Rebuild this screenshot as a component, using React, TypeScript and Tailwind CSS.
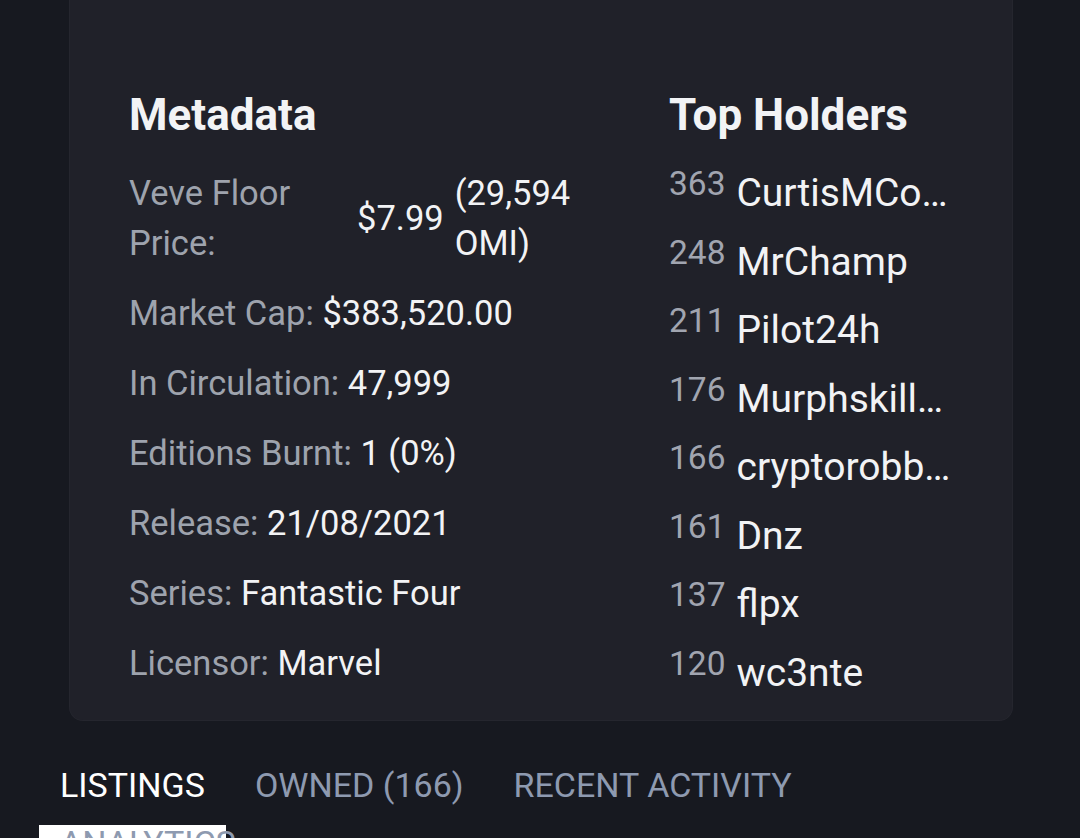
import { useState } from "react";

type Row = { label: string; value: string };

const metadata: Row[] = [
    { label: "Market Cap:", value: "$383,520.00" },
    { label: "In Circulation:", value: "47,999" },
    { label: "Editions Burnt:", value: "1 (0%)" },
    { label: "Release:", value: "21/08/2021" },
    { label: "Series:", value: "Fantastic Four" },
    { label: "Licensor:", value: "Marvel" },
];

const holders = [
    { count: 363, name: "CurtisMCo…" },
    { count: 248, name: "MrChamp" },
    { count: 211, name: "Pilot24h" },
    { count: 176, name: "Murphskill…" },
    { count: 166, name: "cryptorobb…" },
    { count: 161, name: "Dnz" },
    { count: 137, name: "flpx" },
    { count: 120, name: "wc3nte" },
];

const tabs = ["Listings", "Owned (166)", "Recent Activity", "Analytics"];

export default function App() {
    const [active, setActive] = useState(0);

    return (
        <div
            className="h-[838px] overflow-hidden bg-[#171920] text-[#f2f3f5]"
            style={{ fontFamily: "Roboto, 'Noto Sans', sans-serif" }}
        >
            {/* Card */}
            <div className="ml-[69px] w-[944px] rounded-b-[14px] border border-t-0 border-[#25262e] bg-[#202129] px-[59px] pt-[90px] pb-[22px]">
                <div className="grid grid-cols-[540px_1fr]">
                    {/* Metadata */}
                    <div>
                        <h2 className="text-[44px] font-bold leading-[50px]">Metadata</h2>
                        <div className="mt-[28px] flex flex-col gap-[20px] text-[34.5px] leading-[50px]">
                            <div className="flex items-center">
                                <span className="w-[228px] text-[#9ea3ad]">Veve Floor Price:</span>
                                <span>$7.99</span>
                                <span className="ml-[11px] w-[124px]">(29,594 OMI)</span>
                            </div>
                            {metadata.map((row) => (
                                <div key={row.label}>
                                    <span className="text-[#9ea3ad]">{row.label}</span> {row.value}
                                </div>
                            ))}
                        </div>
                    </div>

                    {/* Top Holders */}
                    <div>
                        <h2 className="text-[44px] font-bold leading-[50px]">Top Holders</h2>
                        <div className="mt-[26px] flex flex-col gap-[16.5px]">
                            {holders.map((h) => (
                                <div key={h.count} className="flex items-start gap-[11px]">
                                    <span className="text-[33.5px] leading-[36px] text-[#a1a5b0]">{h.count}</span>
                                    <span className="mt-[2px] whitespace-nowrap text-[39px] leading-[50px]">{h.name}</span>
                                </div>
                            ))}
                        </div>
                    </div>
                </div>
            </div>

            {/* Tabs */}
            <div className="ml-[39px] mt-[44px] flex w-[840px] flex-wrap gap-x-[8px] gap-y-[18px]">
                {tabs.map((tab, i) => (
                    <button
                        key={tab}
                        onClick={() => setActive(i)}
                        className={`relative px-[21px] text-[34px] uppercase leading-[40px] ${i === active ? "text-white" : "z-10 text-[#8e9ab0]"
                            }`}
                    >
                        {tab}
                        {i === active && (
                            <span className="absolute left-0 right-0 top-[60px] h-[14px] bg-white" />
                        )}
                    </button>
                ))}
            </div>
        </div>
    );
}
